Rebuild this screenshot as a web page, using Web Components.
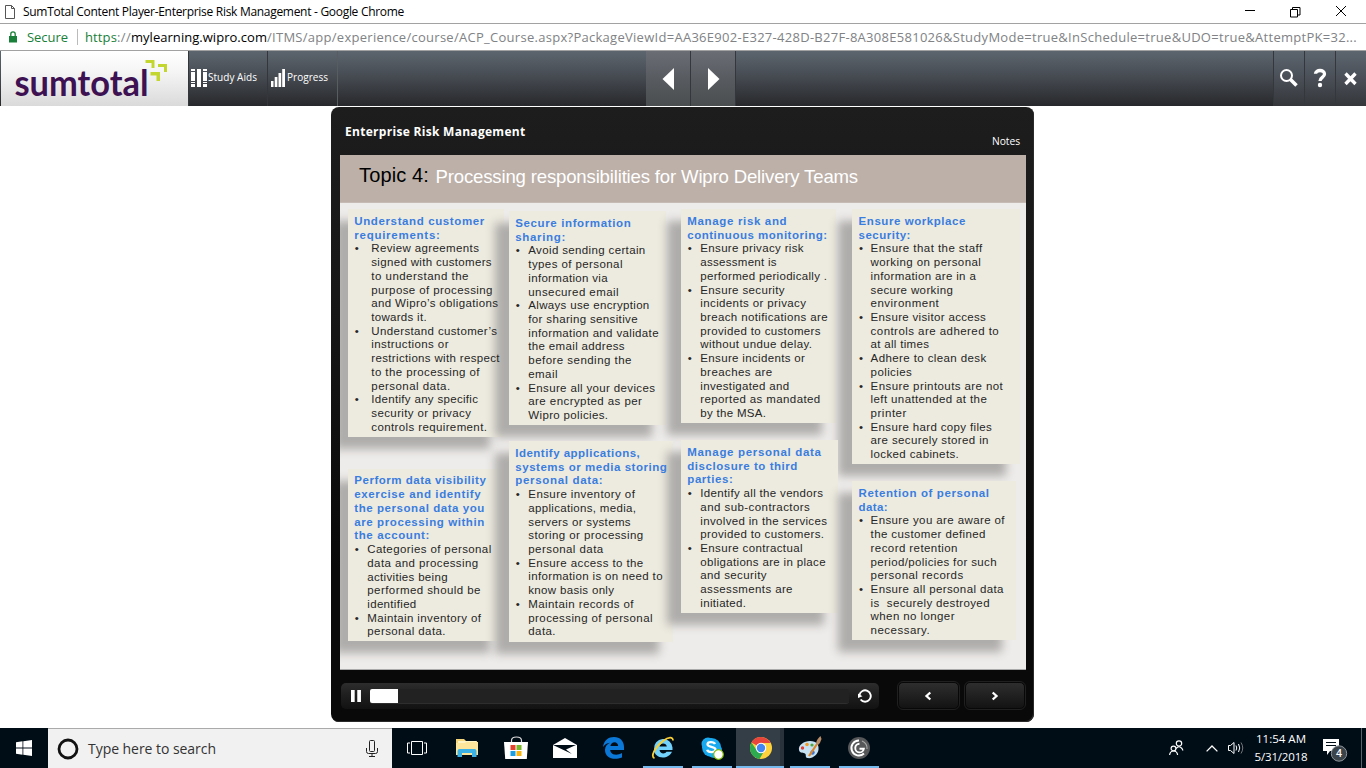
<!DOCTYPE html>
<html lang="en">
<head>
<meta charset="utf-8">
<title>SumTotal Content Player-Enterprise Risk Management</title>
<style>
html,body{margin:0;height:100%;overflow:hidden;background:#fff}
body{font-family:"Open Sans","Noto Sans",sans-serif}
</style>
</head>
<body>
<content-window></content-window>
<script>
const define = (name, html, setup) => {
  const t = document.createElement('template');
  t.innerHTML = html;
  customElements.define(name, class extends HTMLElement {
    constructor(){ super(); this.attachShadow({mode:'open'}).append(t.content.cloneNode(true)); }
    connectedCallback(){ if (setup) setup(this, this.shadowRoot); }
  });
};

/* Text tracked so that it fills the width in its "w" attribute. */
define('fit-text', `<style>:host{display:block;white-space:pre;width:max-content}span{display:inline-block}</style><span><slot></slot></span>`, (el, root) => {
  const s = root.querySelector('span');
  const w = +el.getAttribute('w');
  const n = el.textContent.length;
  s.style.letterSpacing = (w - s.getBoundingClientRect().width) / n + 'px';
});

define('title-bar', `<style>
:host{display:flex;align-items:center;height:23px;border-bottom:1px solid #a2a2a2;color:#000;font-size:12px;line-height:23px;box-sizing:content-box}
.doc{margin:0 8px 0 5px}
fit-text{flex:1}
.ctl{margin-left:auto;margin-right:19px;display:block}
</style>
<svg class="doc" width="10" height="14" viewBox="0 0 10 14"><path d="M.5.5h6l3 3v10h-9z M6.5.5v3h3" fill="#fff" stroke="#555"/></svg>
<fit-text w="381">SumTotal Content Player-Enterprise Risk Management - Google Chrome</fit-text>
<svg class="ctl" width="102" height="12" viewBox="0 0 102 12" fill="none" stroke="#000"><path d="M0 4.500h10M45.500 3.500h7v7.500h-7zM47.500 3.500v-2h7.500v7.500h-2.500M91 0l10 10M101 0l-10 10"/></svg>`);

define('address-bar', `<style>
:host{display:flex;align-items:center;height:26px;border-bottom:1px solid #a2a2a2;font-size:13px;line-height:26px;color:#808285}
svg{margin:0 10px 0 9px}
.g{color:#188038}.k{color:#000}
i{width:1px;height:16px;background:#bbb;margin:0 7px 0 9px}
</style>
<svg width="8" height="12" viewBox="0 0 8 12"><path d="M0 5h8v6.500H0z" fill="#188038"/><path d="M1.800 5V3a2.200 2.200 0 0 1 4.400 0v2" fill="none" stroke="#188038" stroke-width="1.300"/></svg>
<fit-text class="g" w="41">Secure</fit-text><i></i>
<fit-text class="g" w="32">https</fit-text><fit-text w="14">://</fit-text><fit-text class="k" w="136">mylearning.wipro.com</fit-text><fit-text w="1090">/ITMS/app/experience/course/ACP_Course.aspx?PackageViewId=AA36E902-E327-428D-B27F-8A308E581026&amp;StudyMode=true&amp;InSchedule=true&amp;UDO=true&amp;AttemptPK=32...</fit-text>`);

define('course-toolbar', `<style>
:host{display:flex;height:55px;background:linear-gradient(#5c656e,#474c53 45%,#27282b);color:#fff;font-size:10px;box-sizing:border-box;padding-left:1px}
.logo{width:187px;background:linear-gradient(#fff,#f4f4f4 40%,#dadada);display:block;flex:none}
.tool{display:flex;align-items:center;box-sizing:border-box;border-left:1px solid #33373c;line-height:14px;padding-bottom:1px}
.tool svg{display:block}.tool fit-text{padding-bottom:2px}
.a{width:79px;padding-left:2px}.a fit-text{margin-left:1px}
.p{width:71px;padding-left:3px;border-right:1px solid #585d62}.p fit-text{margin-left:2px}
.nav{display:flex;margin-left:308px}
.nav svg{background:linear-gradient(#6a6d74,#585b60 50%,#4a4e4f);border-right:1px solid #34383c;display:block}
.end{display:flex;margin-left:auto}
.end svg{border-left:1px solid #34383c;background:linear-gradient(#5c656e,#4a4f57 50%,#34363a);display:block}
</style>
<svg class="logo" width="187" height="55" viewBox="0 0 187 55"><text x="13.500" y="45" font-family="Lato" font-weight="700" font-size="36" textLength="134" lengthAdjust="spacingAndGlyphs" fill="#3d1152">sumtotal</text><g fill="#c3d62f"><path d="M144.500 9h9v8h-3v-5h-6zM157 13h9v8h-3v-5h-6zM149.500 21h9.500v9h-3.500v-5.500h-6z"/></g></svg>
<div class="tool a"><svg width="16" height="18" viewBox="0 0 16 18" fill="#fff"><path d="M0 0h4v2H0zM0 3h4v9H0zM0 13h4v1H0zM0 15h4v3H0zM6 0h4v18H6zM12 0h4v2h-4zM12 3h4v9h-4zM12 13h4v1h-4zM12 15h4v3h-4z"/></svg><fit-text w="49">Study Aids</fit-text></div>
<div class="tool p"><svg width="14" height="18" viewBox="0 0 14 18" fill="#fff"><path d="M0 12h2.500v6H0zM3.700 8h2.700v10H3.700zM7.500 4h2.700v14H7.500zM11.200 0H14v18h-2.800z"/></svg><fit-text w="41">Progress</fit-text></div>
<div class="nav"><svg width="44" height="55" viewBox="0 0 44 55"><path d="M28 17v22L16.500 28z" fill="#fff"/></svg><svg width="44" height="55" viewBox="0 0 44 55"><path d="M17 17v22l11.500-11z" fill="#fff"/></svg></div>
<div class="end">
<svg width="30" height="55" viewBox="0 0 30 55" fill="none" stroke="#fff"><circle cx="12.500" cy="24.500" r="5.500" stroke-width="2"/><path d="M16.500 28.500l6 6" stroke-width="3.500"/></svg>
<svg width="30" height="55" viewBox="0 0 30 55" fill="none" stroke="#fff"><path d="M10.500 22.800C10.500 18.500 19.500 18.200 19.500 23c0 3.500-4.500 3.200-4.500 7" stroke-width="3.300"/><circle cx="15" cy="34" r="2.200" fill="#fff" stroke="none"/></svg>
<svg width="30" height="55" viewBox="0 0 30 55"><path d="M9.500 22.500l10 10.500M19.500 22.500l-10 10.500" stroke="#fff" stroke-width="3.300"/></svg>
</div>`);

/* Cards: [width, height, top margin, text indent, title lines, bullet groups]; a line is [text, width]. */
const cards = [
 [156,227.7,0,17,[["Understand customer",129.3],["requirements:",85]],[
  [["Review agreements",106.7],["signed with customers",119.3],["to understand the",96.3],["purpose of processing",120.3],["and Wipro’s obligations",125.7],["towards it.",54.3]],
  [["Understand customer’s",124.7],["instructions or",76.3],["restrictions with respect",127.3],["to the processing of",107.3],["personal data.",78]],
  [["Identify any specific",105.7],["security or privacy",98.7],["controls requirement.",114.7]]]],
 [157,214,2,13,[["Secure information",114.7],["sharing:",49.3]],[
  [["Avoid sending certain",116],["types of personal",93.3],["information via",78.3],["unsecured email",89.3]],
  [["Always use encryption",120],["for sharing sensitive",108.3],["information and validate",129.3],["the email address",95.3],["before sending the",102.3],["email",28.3]],
  [["Ensure all your devices",125.7],["are encrypted as per",112.7],["Wipro policies.",78.7]]]],
 [155,214,0,13,[["Manage risk and",98.7],["continuous monitoring:",139]],[
  [["Ensure privacy risk",102.3],["assessment is",75.3],["performed periodically .",125.7]],
  [["Ensure security",83.3],["incidents or privacy",104.7],["breach notifications are",126.3],["provided to customers",119.3],["without undue delay.",110.7]],
  [["Ensure incidents or",103.7],["breaches are",71],["investigated and",88],["reported as mandated",119],["by the MSA.",64.7]]]],
 [168,255,0,12,[["Ensure workplace",106],["security:",51]],[
  [["Ensure that the staff",110.7],["working on personal",109.3],["information are in a",104.3],["secure working",81.3],["environment",67.3]],
  [["Ensure visitor access",114.3],["controls are adhered to",127.3],["at all times",57.3]],
  [["Adhere to clean desk",114.7],["policies",40.3]],
  [["Ensure printouts are not",131.3],["left unattended at the",115.3],["printer",35]],
  [["Ensure hard copy files",120.3],["are securely stored in",117],["locked cabinets.",87.3]]]],
 [156,172.5,28.5,13,[["Perform data visibility",130.7],["exercise and identify",125.7],["the personal data you",129.3],["are processing within",129.3],["the account:",74.3]],[
  [["Categories of personal",123],["data and processing",110],["activities being",79.3],["performed should be",112.3],["identified",48]],
  [["Maintain inventory of",112.7],["personal data.",77.3]]]],
 [164,201,1,13,[["Identify applications,",123.7],["systems or media storing",150.7],["personal data:",86.7]],[
  [["Ensure inventory of",105.7],["applications, media,",106.7],["servers or systems",101.3],["storing or processing",114],["personal data",74]],
  [["Ensure access to the",114],["information is on need to",133.3],["know basis only",84.7]],
  [["Maintain records of",104.3],["processing of personal",123.3],["data.",26.3]]]],
 [157,173,0,13,[["Manage personal data",133],["disclosure to third",109.3],["parties:",44.7]],[
  [["Identify all the vendors",121.7],["and sub-contractors",108.7],["involved in the services",125.7],["provided to customers.",122.7]],
  [["Ensure contractual",101.3],["obligations are in place",124.3],["and security",65.3],["assessments are",91.3],["initiated.",44.7]]]],
 [164,159,41,12,[["Retention of personal",129.7],["data:",28]],[
  [["Ensure you are aware of",133],["the customer defined",114],["record retention",86],["period/policies for such",125],["personal records",91.7]],
  [["Ensure all personal data",132],["is  securely destroyed",118],["when no longer",83],["necessary.",58.3]]]]
];

define('topic-card', `<style>
:host{display:block;box-sizing:border-box;position:relative;background:#edebdf;padding:5.700px 0 0 6.300px;box-shadow:-14px 12px 9px #afadab;font:11.500px/13.72px "Liberation Sans",Arial,sans-serif;color:#262626}
h3{margin:0;font:inherit;font-weight:700;color:#3a7de0;position:relative;z-index:2}
ul{margin:0;padding:0;list-style:none;position:relative;z-index:2}
li{position:relative;padding-left:var(--indent)}
li::before{content:"•";position:absolute;left:.5px;top:0}
fit-text{height:13.72px}
</style><h3></h3><ul></ul>`, (el, root) => {
  const [w,h,m,indent,title,groups] = cards[+el.getAttribute('n')];
  Object.assign(el.style,{width:w+'px',height:h+'px',marginTop:m+'px'});
  el.style.setProperty('--indent', indent+'px');
  const line = ([t,w]) => `<fit-text w="${w+1.3}">${t}</fit-text>`;
  root.querySelector('h3').innerHTML = title.map(line).join('');
  root.querySelector('ul').innerHTML = groups.map(g => `<li>${g.map(line).join('')}</li>`).join('');
});

define('course-slide', `<style>
:host{display:block;width:686px;height:515px;overflow:hidden;background:#eeecea;isolation:isolate;box-sizing:border-box;border-bottom:1px solid #aaa;font-family:"Liberation Sans",Arial,sans-serif}
header{display:flex;align-items:baseline;height:48px;background:#bcb0a8;padding-left:19px;line-height:40px;box-sizing:border-box;border-bottom:1px solid #c6bcb5}
.t{font-size:20px;color:#000}.s{font-size:18.6px;color:#fff;margin-left:6.500px;position:relative;top:1px}
main{display:grid;grid-template-columns:161px 172px 171.3px 172px;grid-template-rows:231px 230px;align-items:start;padding:6.3px 0 0 8px}
</style>
<header><fit-text class="t" w="70">Topic 4:</fit-text><fit-text class="s" w="422.500">Processing responsibilities for Wipro Delivery Teams</fit-text></header>
<main>${cards.map((_,i)=>`<topic-card n="${i}"></topic-card>`).join('')}</main>`);

define('player-controls', `<style>
:host{display:flex;align-items:center;height:51px;padding-left:1px}
.seek{display:flex;align-items:center;width:538px;height:26px;border-radius:5px;background:linear-gradient(#2d2d2d,#1f1f1f 45%,#121212);box-sizing:border-box;padding:0 7px 0 10px}
.track{width:481px;height:15px;margin:1px 9px 0;border-radius:3px;background:#222;box-sizing:border-box;border-bottom:1px solid #2e2e2e}
.fill{width:28px;height:14px;background:#fff;border-radius:2px 0 0 2px}
svg{display:block}
.b{width:61px;height:27px;border-radius:5px;box-sizing:border-box;border:1px solid #080808;outline:1px solid #202020;background:linear-gradient(#2e2e2e,#131313);display:grid;place-items:center}
.b1{margin-left:19px}.b2{margin-left:6px}
</style>
<div class="seek"><svg width="10" height="12" viewBox="0 0 10 12"><path d="M0 0h3.700v12H0zM6.300 0H10v12H6.300z" fill="#fff"/></svg><div class="track"><div class="fill"></div></div><svg width="14" height="14" viewBox="0 0 14 14"><path d="M2.600 10.500A5.700 5.700 0 1 0 1.500 6" fill="none" stroke="#fff" stroke-width="1.900"/><path d="M0 4.500l4.500 2.700L0 9z" fill="#fff"/></svg></div>
<div class="b b1"><svg width="8" height="10" viewBox="0 0 8 10"><path d="M6.300 1.500L2.500 5l3.800 3.500" fill="none" stroke="#fff" stroke-width="2.300"/></svg></div>
<div class="b b2"><svg width="8" height="10" viewBox="0 0 8 10"><path d="M1.700 1.500L5.500 5 1.700 8.500" fill="none" stroke="#fff" stroke-width="2.300"/></svg></div>`);

define('course-player', `<style>
:host{display:block;box-sizing:border-box;width:703px;height:615px;margin:1px 0 0 331px;border-radius:8px;background:linear-gradient(#1d1d1d,#171717 30%,#090909 75%);padding:0 9px;box-shadow:inset -1px -1px 0 #2a2a2a}
header{height:48px;display:flex;justify-content:space-between;color:#fff}
.h{font-weight:700;font-size:12px;line-height:16px;padding:17px 0 0 5px}
.n{font-size:10.3px;font-weight:500;line-height:14px;padding:27px 5px 0 0}
</style>
<header><fit-text class="h" w="180.500">Enterprise Risk Management</fit-text><fit-text class="n" w="28">Notes</fit-text></header>
<course-slide></course-slide><player-controls></player-controls>`);

define('task-icon', `<style>
:host{display:grid;place-items:center;width:49px;height:40px;box-sizing:border-box;flex:none}
:host([open]){background:linear-gradient(#76b9ed,#76b9ed) 50% 100%/40px 2px no-repeat}
:host([active]){background:linear-gradient(#76b9ed,#76b9ed) 0 100%/48px 2px no-repeat,linear-gradient(90deg,#343e46 44px,#29323a 44px 48px,transparent 48px)}
</style><slot></slot>`);

define('task-bar', `<style>
:host{display:flex;height:40px;background:#000d17;color:#fff}
svg{display:block}
.start{width:48px;display:grid;place-items:center}
.search{width:344px;box-sizing:border-box;border-top:1px solid #aaa;background:#f1f1f1;display:flex;align-items:center;padding:0 14px 0 9px;color:#333;font-size:14px;line-height:39px}
.search fit-text{margin-left:9px}.mic{margin-left:auto}
.tv{width:49px;margin-right:1px}
.tray{margin-left:auto;display:flex;align-items:center}
.clock{font-size:11.500px;line-height:18.500px;width:54px;display:flex;flex-direction:column;align-items:center}
.end{width:1px;height:40px;background:#59636a;margin:0 4px 0 12px}
</style>
<div class="start"><svg width="16" height="16" viewBox="0 0 16 16" fill="#fff"><path d="M0 2.200L6.500 1.300v6.300H0zM7.300 1.200L16 0v7.600H7.300zM0 8.400h6.500v6.300L0 13.800zM7.300 8.400H16V16l-8.700-1.200z"/></svg></div>
<div class="search"><svg width="22" height="22" viewBox="0 0 22 22"><circle cx="11" cy="11" r="9" fill="none" stroke="#111" stroke-width="2.800"/></svg><fit-text w="128">Type here to search</fit-text><svg class="mic" width="12" height="17" viewBox="0 0 12 17" fill="none" stroke="#222"><path d="M3.500 1.500q0-1 1-1h3q1 0 1 1v9q0 1-1 1h-3q-1 0-1-1zM.5 8v3.500q0 2 2 2h7q2 0 2-2V8M6 13.500v3M3 16.500h6"/></svg></div>
<task-icon class="tv"><svg width="20" height="14" viewBox="0 0 20 14" fill="none" stroke="#fff"><path d="M4.500.5h11v13h-11zM3 2H.5v10H3M17 2h2.500v10H17"/></svg></task-icon>
<task-icon><svg width="22" height="20" viewBox="0 0 22 20"><path d="M0 1h8l2 2h11v14H0z" fill="#f5d57a"/><path d="M2 3h18v3H2z" fill="#fff3c8"/><path d="M0 5h9l1-1h12v13H0z" fill="#fde69c"/><path d="M1.500 19v-6q0-2 2-2h15q2 0 2 2v6H16v-4H6v4z" fill="#3bb1e5"/></svg></task-icon>
<task-icon><svg width="24" height="24" viewBox="0 0 24 24"><path d="M7.500 7V4.500Q7.500 1 12.500 1t5 3.500V7" fill="none" stroke="#ddd" stroke-width="1.200"/><path d="M0 6h24l-1.200 17H1.200z" fill="#fff"/><path d="M6.500 9h5v5h-5z" fill="#e5432d"/><path d="M12.500 9h5v5h-5z" fill="#78b82a"/><path d="M6.500 15h5v5h-5z" fill="#1b9fe0"/><path d="M12.500 15h5v5h-5z" fill="#f8b412"/></svg></task-icon>
<task-icon><svg width="24" height="20" viewBox="0 0 24 20"><path d="M0 7l12-7 12 7v13H0z" fill="#fff"/><path d="M0 7h23l-10 4.500 6 4.500z" fill="#000d17"/></svg></task-icon>
<task-icon><svg width="21" height="22" viewBox="0 0 21 22"><path d="M0 10C1 3 5.500 0 11 0c6 0 10 4 10 10v3H7.200c.3 5 6.800 6 11.800 3v4.500C10 24 2 20.500 2 13c0-3.500 2-6 5-7.300-3 .4-5.500 1.800-7 4.300zM7.400 9h7.800C15 3.700 8 4 7.400 9z" fill="#0b78d7" fill-rule="evenodd"/></svg></task-icon>
<task-icon open><svg width="24" height="24" viewBox="0 0 24 24"><path d="M3 13a9 9 0 0 1 18.500-1.500V14H8.500c.4 4 5.500 4.400 7 1.700h5.500C17.500 24 3 23.500 3 13zm5.500-2.500h7.300c-.4-3.900-6.800-3.900-7.300 0z" fill="#72d2fb" fill-rule="evenodd"/><path d="M3.500 22C-1 21 4 11 12 5c5.500-4.200 10-4.500 10-.5" fill="none" stroke="#f8cf36" stroke-width="1.800"/></svg></task-icon>
<task-icon open><svg width="24" height="24" viewBox="0 0 24 24"><circle cx="8" cy="8" r="6.500" fill="#1cacf0"/><circle cx="14.500" cy="14.500" r="7.500" fill="#1cacf0"/><circle cx="11.500" cy="11.500" r="9.500" fill="#18a9ee"/><path d="M15 8c-1-2.500-7.500-2.800-7.500.3 0 3.200 8 1.700 8 5.200 0 3.500-7.500 3.200-8.300.2" fill="none" stroke="#fff" stroke-width="2.300"/><circle cx="18.500" cy="18.500" r="4.800" fill="#fff" stroke="#7fba00" stroke-width="1.200"/></svg></task-icon>
<task-icon active><svg width="22" height="22" viewBox="0 0 22 22"><circle cx="11" cy="11" r="11" fill="#fdd23c"/><path d="M11 11L1.500 5.500A11 11 0 0 1 20.700 6H11z" fill="#e8453c"/><path d="M1.500 5.500A11 11 0 0 0 9.500 22l5-8.500L11 11 6.500 13z" fill="#2da94f"/><circle cx="11" cy="11" r="5.200" fill="#fff"/><circle cx="11" cy="11" r="4.200" fill="#4285f4"/></svg></task-icon>
<task-icon open><svg width="24" height="24" viewBox="0 0 24 24"><path d="M1 14C0 9 6 5 12 5c7 0 9 4 8.500 8.500-.5 5-6 9.500-11 8.500-3-.6-.5-4-3-4.800C4.500 16.500 1.600 17 1 14z" fill="#c6e2f2"/><circle cx="4.500" cy="12" r="1.700" fill="#e23c31"/><circle cx="9" cy="8.500" r="1.800" fill="#f29a26"/><circle cx="14.500" cy="16.500" r="2.200" fill="#3c76d2"/><circle cx="14" cy="9" r="1.600" fill="#51a63c"/><path d="M11 20l8-12" stroke="#e08427" stroke-width="2.200"/><path d="M18 8q0-4 4.500-8l1 3q-1 4-3.500 6z" fill="#b98d68"/></svg></task-icon>
<task-icon open><svg width="22" height="22" viewBox="0 0 22 22"><circle cx="11" cy="11" r="11" fill="#555759"/><g fill="none" stroke="#fff" stroke-width="1.900"><path d="M11 3.500a7.500 7.500 0 1 0 5 13"/><path d="M11.500 6.800a4.300 4.300 0 1 0 4.300 5H11.500"/><path d="M14 4q5.500 2.500 5 8" stroke="#aaa" stroke-width="1.200"/></g></svg></task-icon>
<div class="tray">
<svg width="15" height="16" viewBox="0 0 15 16" fill="none" stroke="#fff" stroke-width="1.200"><circle cx="10" cy="3.500" r="2.700"/><path d="M7 8.500q3-3.500 6 0l1 2"/><circle cx="4.500" cy="8.500" r="2.400"/><path d="M.6 15q.5-4 4-4t4 4"/></svg>
<svg width="12" height="7" viewBox="0 0 12 7" style="margin:0 10px 0 22px"><path d="M.6 6.400L6 1l5.400 5.400" fill="none" stroke="#fff" stroke-width="1.300"/></svg>
<svg width="16" height="14" viewBox="0 0 16 14" fill="none" stroke="#fff" style="margin-right:10px"><path d="M.5 4.500h2l3.500-3v11l-3.500-3h-2zM8 4.500q1.500 2.500 0 5M10.500 3q2.500 4 0 8"/><path d="M13 1.500q3.500 5.500 0 11" stroke="#777"/></svg>
<div class="clock"><fit-text w="50">11:54 AM</fit-text><fit-text w="53">5/31/2018</fit-text></div>
<svg width="26" height="25" viewBox="0 0 26 25" style="margin-left:15px;margin-top:4px"><path d="M0 1h16v12H7l-3 4v-4H0z" fill="#fff"/><path d="M3 4.500h10M3 7.500h10" stroke="#000d17"/><circle cx="16" cy="15.500" r="7.700" fill="#3b444b" stroke="#8c9297"/><text x="16" y="19.300" text-anchor="middle" font-family="Open Sans" font-size="10.500" font-weight="600" fill="#fff">4</text></svg>
<div class="end"></div></div>`);

define('content-window', `<style>
:host{display:flex;flex-direction:column;width:1366px;height:768px;background:#fff}
title-bar,address-bar,course-toolbar,task-bar{flex:none}
main{flex:1;min-height:0}
</style><title-bar></title-bar><address-bar></address-bar><course-toolbar></course-toolbar><main style="display:flow-root"><course-player></course-player></main><task-bar></task-bar>`);
</script>
</body>
</html>
